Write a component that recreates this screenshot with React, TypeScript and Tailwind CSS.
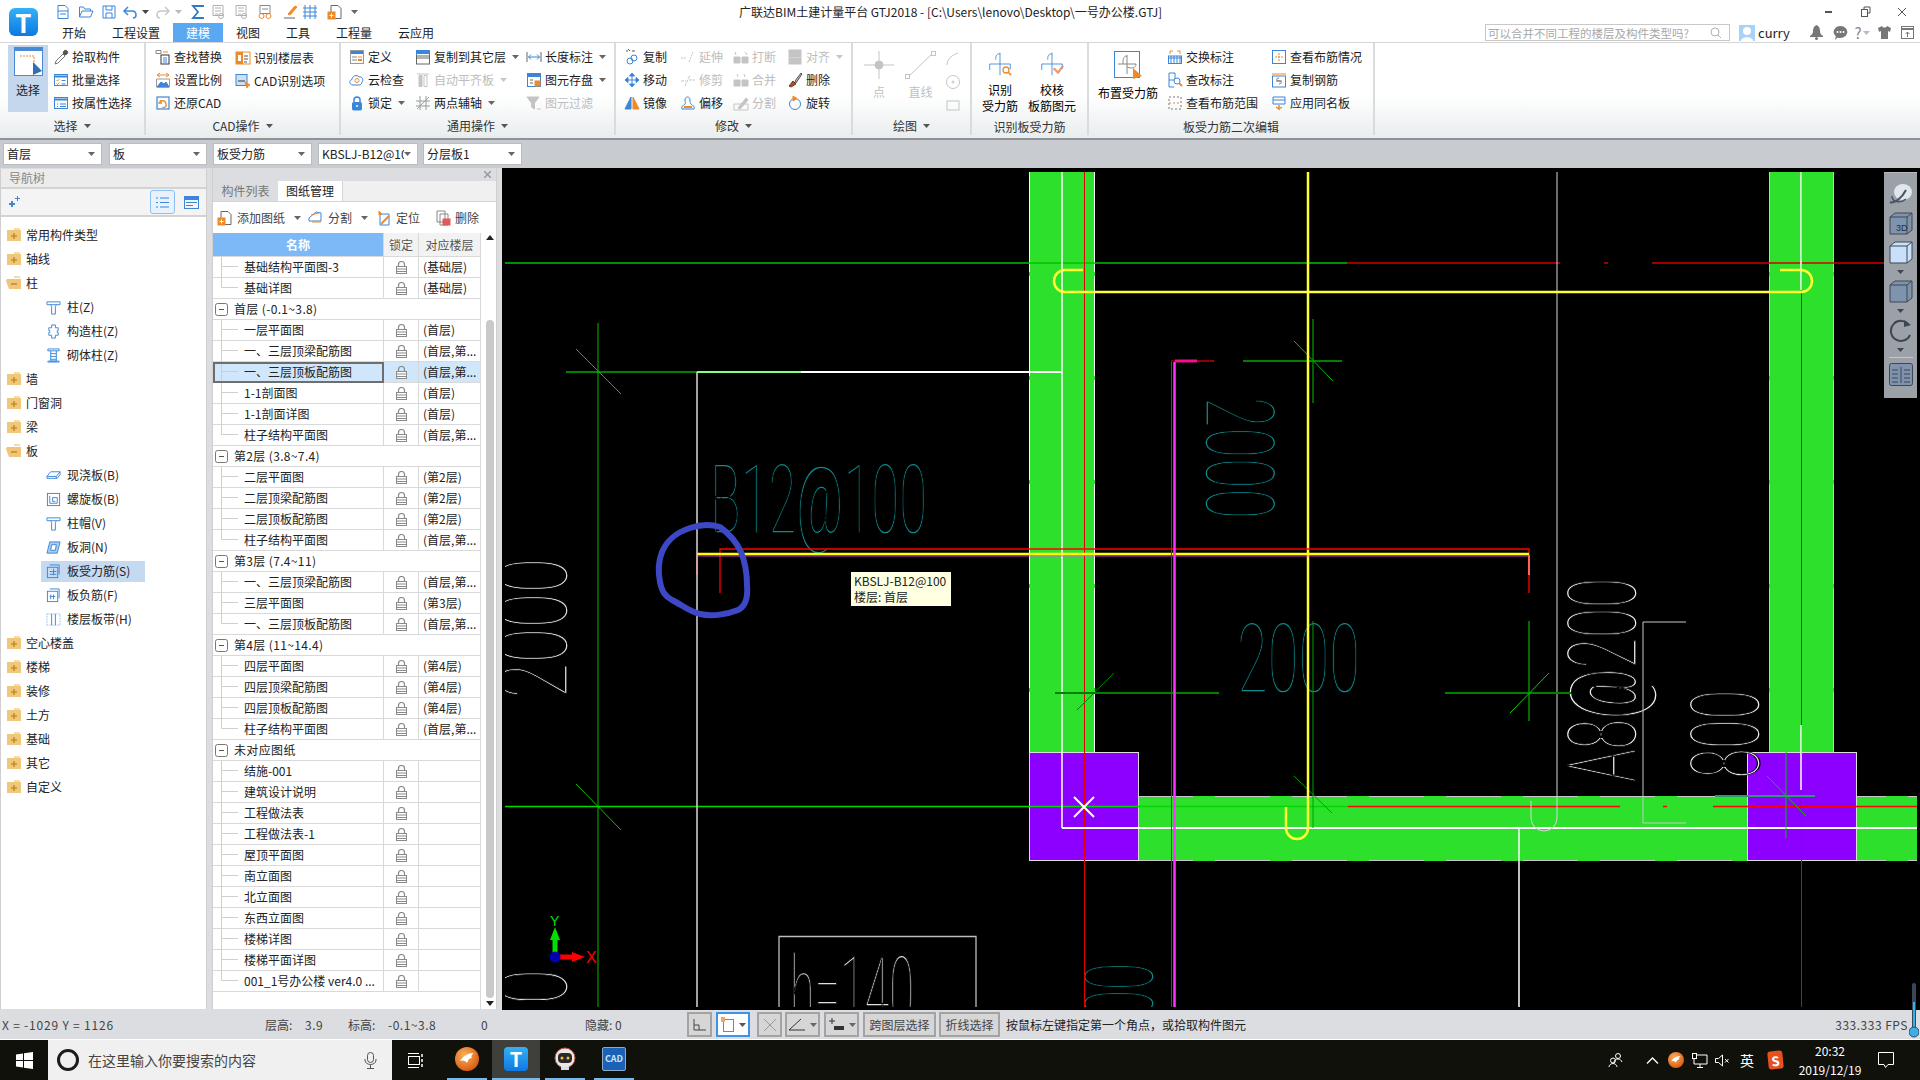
import React from "react";

const BL = "#3b86d8";
const OR = "#ef8a2a";
const GR = "#c4c4c4";

const Ic = ({ s = 16, c = BL, children }: { s?: number; c?: string; children: React.ReactNode }) => (
  <svg width={s} height={s} viewBox="0 0 16 16" fill="none" stroke={c} strokeWidth="1" className="block shrink-0">
    {children}
  </svg>
);

const Caret = ({ c = "#555" }: { c?: string }) => (
  <svg width="7" height="4" viewBox="0 0 7 4" className="block shrink-0">
    <path d="M0 0h7L3.500 4z" fill={c} />
  </svg>
);

// ribbon + quick access icons
const icons: Record<string, React.ReactNode> = {
  doc: <><path d="M3 1.500h7l3 3v10H3z" /><path d="M3 7h10M5 10h6" /></>,
  open: <><path d="M1.500 13V3h4l1 2h6v2" /><path d="M1.500 13l2.500-6h11l-2.500 6z" /></>,
  save: <><path d="M2 2h12v12H2z" /><path d="M5 2v4h6V2M5 14V9h6v5" /></>,
  undo: <><path d="M6 3L2 7l4 4" strokeWidth="1.500" /><path d="M2 7h8c3 0 4 2 4 4s-1 3-3 3" strokeWidth="1.500" /></>,
  redo: <><path d="M10 3l4 4-4 4" strokeWidth="1.500" /><path d="M14 7H6c-3 0-4 2-4 4s1 3 3 3" strokeWidth="1.500" /></>,
  sigma: <path d="M13 3V2H3l5 6-5 6h10v-1" strokeWidth="1.800" />,
  report: <><path d="M3 1.500h10v10H3z" /><path d="M5 4h6M5 7h6M5 10h3" /><circle cx="11" cy="12" r="2.500" /></>,
  glass: <><circle cx="4.500" cy="12" r="2.500" stroke={OR} /><circle cx="11.500" cy="12" r="2.500" stroke={OR} /><path d="M3 1.500h10v8H3zM5 5h6" /></>,
  brush: <><path d="M6 10l7-8 2 1-7 8z" stroke={OR} fill={OR} /><path d="M2 14h11" stroke="#666" /></>,
  grid: <path d="M3 1v14M8 1v14M13 1v14M1 4h14M1 8h14M1 12h14" />,
  docadd: <><path d="M4 1.500h7l3 3v10H4z" stroke="#666" /><rect x="1" y="8" width="7" height="7" fill={OR} stroke={OR} /><path d="M4.500 9.500v4M2.500 11.500h4" stroke="#fff" /></>,
  pick: <><path d="M2 15l1-3 7-7 2 2-7 7z" stroke="#777" /><path d="M10 4l1-2c1-1 2-1 3 0s1 2 0 3l-2 1z" fill="#555" stroke="#555" /></>,
  batch: <><rect x="1.500" y="2.500" width="13" height="11" /><path d="M2 4.500h12" strokeWidth="2" /><path d="M3.500 8l1 1 2-2M3.500 11.500l1 1 2-2" stroke={OR} /><path d="M8.500 8.500h4M8.500 12h4" /></>,
  attr: <><rect x="1.500" y="2.500" width="13" height="11" /><path d="M2 4.500h12" strokeWidth="2" /><path d="M4 9h1M4 11.500h1M7 9h6M7 11.500h6" /></>,
  find: <><path d="M1 1.500h5v3H1z" stroke="#888" /><path d="M8 3h5" stroke={OR} /><rect x="6" y="6" width="8" height="9" stroke="#333" /><path d="M8 9h4M8 11h4M8 13h4" stroke={BL} /></>,
  scale: <><path d="M2 3h12" stroke={OR} /><path d="M5 1L2 3l3 2M11 1l3 2-3 2" stroke={OR} /><path d="M1.500 7h13v8h-13z" stroke="#999" /><path d="M2 15l4-5 3 2 2-2 3 5z" fill={BL} /></>,
  restore: <><rect x="2" y="2" width="12" height="12" strokeWidth="1.200" /><path d="M6 5L4 8h3M5 7.500c2-3 5-2 6 1s-2 5-4 4" stroke={OR} strokeWidth="1.300" /></>,
  floor: <><rect x="1" y="2" width="14" height="12" stroke={OR} /><rect x="1.500" y="2.500" width="6" height="11" fill={OR} stroke={OR} /><path d="M3 5h3v6H3z" fill="#fff" stroke="none" /><path d="M9 6h4M9 9h4M9 12h3" stroke="#555" /></>,
  cadopt: <><rect x="1" y="1.500" width="11" height="11" fill="#cfe0f5" /><path d="M3 8h7" stroke="#333" /><path d="M10 9l5 3-2 1-1 2z" fill={OR} stroke={OR} /></>,
  def: <><rect x="1.500" y="1.500" width="13" height="13" stroke="#999" /><path d="M2 3.500h12" strokeWidth="3" /><path d="M3 8h5M3 11h5" stroke="#888" /><path d="M9 8h4" stroke={OR} /><path d="M9 11h4" stroke={OR} strokeWidth="2" /></>,
  cloud: <><path d="M4 13c-4 0-4-5-1-5.500C3 4 8 2 10 5c3-1 5 3 3 5 0 2-2 3-3 3z" /><circle cx="8" cy="8.500" r="2" stroke={OR} /></>,
  lock: <><path d="M5 8V5a3 3 0 0 1 6 0v3" strokeWidth="1.500" /><rect x="3.500" y="7.500" width="9" height="7.500" rx="1" fill={BL} /><circle cx="8" cy="11" r="1" fill="#fff" stroke="none" /></>,
  copyto: <><rect x="1.500" y="1.500" width="13" height="8" /><path d="M2 3.500h12" strokeWidth="3" /><rect x="1.500" y="7" width="13" height="8" stroke="#666" fill="#fff" /><path d="M2 9h12" stroke="#666" /></>,
  autoalign: <><path d="M2 2h12M4 3.500h3v11H4zM9 3.500h3v11H9z" stroke={GR} /><rect x="4" y="4" width="3" height="10" fill={GR} stroke="none" /></>,
  axis: <><path d="M5 1v14M11 1v14M1 6h14M1 11h14" stroke="#999" /><path d="M2 14L14 2" stroke={OR} /></>,
  dim: <><path d="M1 3v10M15 3v10" stroke="#666" /><path d="M2.500 8h11M5 5.500L2.500 8 5 10.500M11 5.500L13.500 8 11 10.500" /></>,
  storage: <><rect x="1.500" y="1.500" width="13" height="13" /><path d="M2 3.500h12" strokeWidth="3" /><path d="M4 8h3M4 11h3" stroke="#666" /><rect x="9" y="9" width="5" height="5" fill={OR} stroke={OR} /></>,
  filter: <><path d="M1 2h12L8.500 8v6L5.500 12V8z" fill={GR} stroke={GR} /><path d="M11 14h4" stroke={GR} /></>,
  copy: <><path d="M2 2h2M8 2h3M6 2l-2-2" stroke="#555" /><circle cx="10" cy="9" r="3" /><circle cx="6" cy="12" r="3" /></>,
  move: <><path d="M8 1v14M1 8h14" /><path d="M8 1L5.500 4h5zM8 15l-2.500-3h5zM1 8l3-2.500v5zM15 8l-3-2.500v5z" fill={BL} /></>,
  mirror: <><path d="M1 14L7 2v12z" fill={BL} stroke={BL} /><path d="M9 2v12h6z" fill={OR} stroke={OR} /></>,
  extend: <path d="M1 9h6M9 13L13 3" stroke={GR} strokeDasharray="2 1" />,
  trim: <path d="M1 9h5M9 8h6M5 14L10 3" stroke={GR} strokeDasharray="3 1" />,
  offset: <><path d="M2 14c-1-4 2-3 3-5 1-1 0-2 0-4 0-4 5-4 5 0 0 2 0 3 1 4 1 2 4 1 3 5z" /><path d="M4 12h8" stroke={OR} strokeWidth="2" /></>,
  breakit: <><path d="M2 3l1 3M12 3l2 3" stroke={GR} /><path d="M1 8h6v6H1zM9 8h6v6H9z" fill={GR} stroke={GR} /></>,
  merge: <><path d="M4 2l1 3M11 2l1 3" stroke={GR} /><path d="M1 8h6v6H1zM9 8h6v6H9z" fill={GR} stroke={GR} /></>,
  split: <><path d="M1 9h14v6H1z" stroke={GR} /><path d="M5 13L13 3l2 2-8 9z" fill={GR} stroke={GR} /></>,
  align: <><rect x="2" y="1" width="12" height="7" fill={GR} stroke={GR} /><rect x="2" y="9" width="12" height="6" fill={GR} stroke={GR} /></>,
  del: <><path d="M2 14l4-5 3 3-5 3z" fill="#a0522d" stroke="#7a3b1a" /><path d="M8 9l6-8 1 1-6 9z" fill="#bbb" stroke="#555" /></>,
  rotate: <><circle cx="8" cy="9" r="5.500" /><path d="M6 1l4 2.500L6 6z" fill={OR} stroke={OR} /></>,
  swap: <><rect x="1.500" y="7" width="13" height="7.500" /><path d="M2 9h12M4 7v8M7 7v8M10 7v8M13 7v8" /><path d="M3 5V2h3M13 5V2h-3" stroke={OR} /></>,
  check: <><path d="M2 1h6v7H2zM2 8v7h5" /><circle cx="10" cy="9" r="3" fill="#fff" /><path d="M12 11l3 3" stroke={OR} strokeWidth="2" /></>,
  range: <><rect x="2" y="2" width="12" height="12" stroke="#777" strokeDasharray="2 2" /><path d="M2 8h12" stroke={OR} strokeDasharray="2 2" /></>,
  rebar: <><rect x="1.500" y="1.500" width="13" height="13" /><path d="M4 8h8M8 4v8" stroke={OR} strokeDasharray="2 1" /></>,
  crebar: <><rect x="1.500" y="4" width="13" height="11" /><path d="M1 2h14" stroke={OR} /><path d="M8 6c-3 0-3 3 0 3s3 3 0 3M5 9h6" stroke="#777" /></>,
  samename: <><path d="M2 2h12v7H2z" /><path d="M2 5h12" /><path d="M8 10v4l-3-2M8 14l3-2" stroke={OR} strokeWidth="1.500" /></>,
  smallarc: <path d="M2 14C2 8 7 4 13 2" stroke={GR} />,
  smallcircle: <><circle cx="8" cy="8" r="6.500" stroke={GR} /><circle cx="8" cy="8" r="1" stroke={GR} /></>,
  smallrect: <rect x="2" y="4" width="12" height="9" stroke={GR} />,
};

const Item = ({ i, t, off, arrow }: { i: string; t: string; off?: boolean; arrow?: boolean }) => (
  <div className={`flex h-[23px] items-center whitespace-nowrap ${off ? "text-[#bdbdbd]" : "text-[#1c1c1c]"}`}>
    <Ic>{icons[i]}</Ic>
    <span className="ml-[3px]">{t}</span>
    {arrow && (
      <span className="ml-[6px]">
        <Caret c={off ? "#c8c8c8" : "#666"} />
      </span>
    )}
  </div>
);

const Group = ({ w, pl, label, children }: { w: string; pl: string; label: React.ReactNode; children: React.ReactNode }) => (
  <div className={`flex h-[92px] shrink-0 flex-col border-r-2 border-[#d9dcde] ${w}`}>
    <div className={`flex h-[71px] pt-[2px] ${pl}`}>{children}</div>
    <div className="flex flex-1 items-center justify-center gap-[6px] pt-[2px] text-[#333]">{label}</div>
  </div>
);

const GroupLabel = ({ t }: { t: string }) => (
  <>
    <span>{t}</span>
    <Caret />
  </>
);

const BigCross = ({ kind }: { kind: string }) => (
  <svg width="28" height="28" viewBox="0 0 28 28" fill="none" stroke={BL} className="block">
    <path d="M14 1v26" />
    <path d="M2 14h24" />
    <path d="M2 21v-7M14 2c-5 0-5 4-5 7M26 14v6" />
    {kind === "scan" && <><circle cx="21" cy="21" r="3.500" stroke={OR} strokeWidth="1.500" /><path d="M24 24l3 3" stroke={OR} strokeWidth="2" /></>}
    {kind === "ok" && <path d="M16 19l5 5 6-8" stroke="#f0946a" strokeWidth="2.500" />}
  </svg>
);

const Ribbon = () => (
  <div className="flex h-[96px] items-start border-t border-[#d6d6d6] bg-gradient-to-b from-white from-[55%] to-[#e9edee]">
    <Group w="w-[146px]" pl="pl-[8px]" label={<GroupLabel t="选择" />}>
      <div className="flex h-[67px] w-[40px] flex-col items-center bg-[#c5d7ec]">
        <svg width="29" height="29" viewBox="0 0 29 29" className="mt-[2px] block">
          <rect x="0.500" y="0.500" width="28" height="28" fill="#fff" stroke="#4a8ad4" />
          <rect x="0" y="0" width="29" height="4" fill="#4a8ad4" />
          <path d="M6 9h14v11" fill="none" stroke={OR} strokeDasharray="2 1" />
          <path d="M19 15l9 9-9 4z" fill="#2f6fb8" />
        </svg>
        <span className="mt-[6px] text-[#222]">选择</span>
      </div>
      <div className="ml-[5px] flex flex-col pt-[1px]">
        <Item i="pick" t="拾取构件" />
        <Item i="batch" t="批量选择" />
        <Item i="attr" t="按属性选择" />
      </div>
    </Group>
    <Group w="w-[195px]" pl="pl-[9px]" label={<GroupLabel t="CAD操作" />}>
      <div className="flex w-[80px] flex-col pt-[1px]">
        <Item i="find" t="查找替换" />
        <Item i="scale" t="设置比例" />
        <Item i="restore" t="还原CAD" />
      </div>
      <div className="flex flex-col pt-[1px]">
        <Item i="floor" t="识别楼层表" />
        <Item i="cadopt" t="CAD识别选项" />
      </div>
    </Group>
    <Group w="w-[275px]" pl="pl-[8px]" label={<GroupLabel t="通用操作" />}>
      <div className="flex w-[66px] flex-col pt-[1px]">
        <Item i="def" t="定义" />
        <Item i="cloud" t="云检查" />
        <Item i="lock" t="锁定" arrow />
      </div>
      <div className="flex w-[111px] flex-col pt-[1px]">
        <Item i="copyto" t="复制到其它层" arrow />
        <Item i="autoalign" t="自动平齐板" off arrow />
        <Item i="axis" t="两点辅轴" arrow />
      </div>
      <div className="flex flex-col pt-[1px]">
        <Item i="dim" t="长度标注" arrow />
        <Item i="storage" t="图元存盘" arrow />
        <Item i="filter" t="图元过滤" off />
      </div>
    </Group>
    <Group w="w-[237px]" pl="pl-[8px]" label={<GroupLabel t="修改" />}>
      <div className="flex w-[56px] flex-col pt-[1px]">
        <Item i="copy" t="复制" />
        <Item i="move" t="移动" />
        <Item i="mirror" t="镜像" />
      </div>
      <div className="flex w-[53px] flex-col pt-[1px]">
        <Item i="extend" t="延伸" off />
        <Item i="trim" t="修剪" off />
        <Item i="offset" t="偏移" />
      </div>
      <div className="flex w-[54px] flex-col pt-[1px]">
        <Item i="breakit" t="打断" off />
        <Item i="merge" t="合并" off />
        <Item i="split" t="分割" off />
      </div>
      <div className="flex flex-col pt-[1px]">
        <Item i="align" t="对齐" off arrow />
        <Item i="del" t="删除" />
        <Item i="rotate" t="旋转" />
      </div>
    </Group>
    <Group w="w-[119px]" pl="pl-[11px]" label={<GroupLabel t="绘图" />}>
      <div className="flex w-[30px] flex-col items-center pt-[6px] text-[#c0c0c0]">
        <svg width="30" height="28" viewBox="0 0 30 28" fill="none" stroke={GR} className="block">
          <path d="M15 0v28M0 14h30" />
          <circle cx="15" cy="14" r="4" fill={GR} />
        </svg>
        <span className="mt-[5px]">点</span>
      </div>
      <div className="ml-[11px] flex w-[31px] flex-col items-center pt-[6px] text-[#c0c0c0]">
        <svg width="31" height="28" viewBox="0 0 31 28" fill="none" stroke={GR} className="block">
          <path d="M3 26L28 2" />
          <rect x="0.500" y="23.500" width="4" height="4" fill="#fff" />
          <rect x="26.500" y="0.500" width="4" height="4" fill="#fff" />
        </svg>
        <span className="mt-[5px]">直线</span>
      </div>
      <div className="ml-[9px] flex flex-col gap-[7px] pt-[6px]">
        <Ic>{icons.smallarc}</Ic>
        <Ic>{icons.smallcircle}</Ic>
        <Ic>{icons.smallrect}</Ic>
      </div>
    </Group>
    <Group w="w-[117px]" pl="pl-[2px]" label={<span className="pt-[2px]">识别板受力筋</span>}>
      <div className="flex w-[52px] flex-col items-center pt-[7px] leading-[16px]">
        <BigCross kind="scan" />
        <span className="mt-[6px]">识别</span>
        <span>受力筋</span>
      </div>
      <div className="flex w-[52px] flex-col items-center pt-[7px] leading-[16px]">
        <BigCross kind="ok" />
        <span className="mt-[6px]">校核</span>
        <span className="whitespace-nowrap">板筋图元</span>
      </div>
    </Group>
    <Group w="w-[286px]" pl="pl-[3px]" label={<span className="pt-[2px]">板受力筋二次编辑</span>}>
      <div className="flex w-[72px] flex-col items-center pt-[6px] leading-[16px]">
        <svg width="28" height="28" viewBox="0 0 28 28" fill="none" className="block">
          <rect x="0.500" y="0.500" width="25" height="26" stroke={BL} />
          <path d="M13 4v19M4 13h18M13 5c-4 0-4 4-4 8M22 13c0 4-4 5-9 3" stroke="#888" />
          <path d="M19 17l9 8-9 3z" fill={OR} />
        </svg>
        <span className="mt-[6px] whitespace-nowrap">布置受力筋</span>
      </div>
      <div className="ml-[3px] flex w-[104px] flex-col pt-[1px]">
        <Item i="swap" t="交换标注" />
        <Item i="check" t="查改标注" />
        <Item i="range" t="查看布筋范围" />
      </div>
      <div className="flex flex-col pt-[1px]">
        <Item i="rebar" t="查看布筋情况" />
        <Item i="crebar" t="复制钢筋" />
        <Item i="samename" t="应用同名板" />
      </div>
    </Group>
  </div>
);

const TopBar = () => (
  <div className="flex h-[42px] bg-white">
    <div className="flex w-[49px] shrink-0 pl-[9px] pt-[8px]">
      <div className="flex h-[28px] w-[29px] items-center justify-center rounded-[6px] bg-gradient-to-b from-[#35b0f5] to-[#0d78e2] text-[26px] leading-none font-bold text-white">
        T
      </div>
    </div>
    <div className="flex min-w-0 flex-1 flex-col">
      <div className="flex h-[23px] items-center">
        <div className="flex w-[690px] items-center pl-[6px]">
          <div className="w-[23px]"><Ic>{icons.doc}</Ic></div>
          <div className="w-[23px]"><Ic>{icons.open}</Ic></div>
          <div className="w-[21px]"><Ic>{icons.save}</Ic></div>
          <Ic>{icons.undo}</Ic>
          <div className="ml-[4px] w-[13px]"><Caret c="#444" /></div>
          <Ic c="#c8c8c8">{icons.redo}</Ic>
          <div className="ml-[4px] w-[15px]"><Caret c="#bbb" /></div>
          <div className="w-[20px]"><Ic c="#2f78c8">{icons.sigma}</Ic></div>
          <div className="w-[23px]"><Ic c="#b0b0b0">{icons.report}</Ic></div>
          <div className="w-[24px]"><Ic c="#b0b0b0">{icons.report}</Ic></div>
          <div className="w-[25px]"><Ic c="#888">{icons.glass}</Ic></div>
          <div className="w-[20px]"><Ic>{icons.brush}</Ic></div>
          <div className="w-[25px]"><Ic>{icons.grid}</Ic></div>
          <div className="w-[24px]"><Ic>{icons.docadd}</Ic></div>
          <Caret c="#666" />
        </div>
        <div className="whitespace-nowrap text-[#222]">广联达BIM土建计量平台 GTJ2018 - [C:\Users\lenovo\Desktop\一号办公楼.GTJ]</div>
        <div className="ml-auto flex items-center">
          <div className="flex w-[37px] justify-center"><div className="h-[2px] w-[7px] bg-[#555]" /></div>
          <div className="flex w-[37px] justify-center">
            <svg width="10" height="11" viewBox="0 0 10 11" fill="none" stroke="#555" className="block">
              <path d="M3 3V1h6v6H7" />
              <rect x="0.500" y="3.500" width="6" height="7" />
            </svg>
          </div>
          <div className="flex w-[36px] justify-center">
            <svg width="10" height="10" viewBox="0 0 10 10" stroke="#555" className="block">
              <path d="M1 1l8 8M9 1l-8 8" />
            </svg>
          </div>
        </div>
      </div>
      <div className="flex h-[19px] items-stretch text-[#222]">
        {["开始", "工程设置", "建模", "视图", "工具", "工程量", "云应用"].map((t) => (
          <div key={t} className={`flex h-[19px] items-center px-[13px] whitespace-nowrap ${t === "建模" ? "bg-[#5aa8f2] text-white" : ""}`}>
            {t}
          </div>
        ))}
        <div className="ml-auto flex items-center">
          <div className="flex h-[17px] w-[245px] items-center border border-[#c8c8c8] px-[2px] text-[11.500px] text-[#a8a8a8]">
            <span className="whitespace-nowrap">可以合并不同工程的楼层及构件类型吗?</span>
            <svg width="12" height="12" viewBox="0 0 12 12" fill="none" stroke="#b0b0b0" className="ml-auto mr-[5px] block">
              <circle cx="5" cy="5" r="4" />
              <path d="M8 8l3 3" />
            </svg>
          </div>
          <div className="ml-[9px] flex h-[16px] w-[16px] items-end justify-center overflow-hidden bg-[#a9d2f7]">
            <svg width="14" height="15" viewBox="0 0 14 15" className="block">
              <circle cx="7" cy="5" r="4" fill="#fff" />
              <path d="M1 15c0-5 12-5 12 0z" fill="#fff" />
            </svg>
          </div>
          <span className="ml-[3px] w-[46px] text-[13px] text-[#222]">curry</span>
          <div className="flex w-[24px] justify-center">
            <svg width="13" height="15" viewBox="0 0 13 15" fill="#777" className="block">
              <path d="M6.500 0C4 1 3 3 3 6c0 2-1 4-3 5v1h13v-1c-2-1-3-3-3-5 0-3-1-5-3.500-6z" />
              <circle cx="6.500" cy="13.500" r="1.500" />
            </svg>
          </div>
          <div className="flex w-[24px] justify-center">
            <svg width="15" height="14" viewBox="0 0 15 14" className="block">
              <path d="M7.500 0a7 6 0 1 1-3 11.500L2 14l.8-3.700A7 6 0 0 1 7.500 0z" fill="#777" />
              <circle cx="4.500" cy="6" r="1" fill="#fff" />
              <circle cx="7.500" cy="6" r="1" fill="#fff" />
              <circle cx="10.500" cy="6" r="1" fill="#fff" />
            </svg>
          </div>
          <div className="flex w-[20px] items-center justify-center gap-[1px] text-[15px] leading-none text-[#888]">
            ?<Caret c="#bbb" />
          </div>
          <div className="flex w-[25px] justify-center">
            <svg width="13" height="13" viewBox="0 0 13 13" className="block">
              <path d="M4 0L0 2l1 4 2-1v8h7V5l2 1 1-4-4-2c-1 2-4 2-5 0z" fill="#777" />
            </svg>
          </div>
          <div className="flex w-[20px] justify-center">
            <svg width="13" height="13" viewBox="0 0 13 13" fill="none" stroke="#777" className="block">
              <rect x="0.500" y="0.500" width="12" height="12" />
              <path d="M1 3h11" strokeWidth="2" />
              <path d="M6.500 11V6M4.500 8l2-2 2 2" />
            </svg>
          </div>
          <div className="w-[3px]" />
        </div>
      </div>
    </div>
  </div>
);

const Select = ({ w, t, gap }: { w: string; t: string; gap: string }) => (
  <div className={`flex h-[22px] shrink-0 items-center border border-[#bdbdbd] bg-white pl-[3px] pr-[6px] text-[#222] ${w} ${gap}`}>
    <span className="min-w-0 flex-1 overflow-hidden whitespace-nowrap">{t}</span>
    <Caret c="#666" />
  </div>
);

const Toolbar = () => (
  <div className="flex h-[30px] items-center border-t-2 border-[#8f9296] bg-[#c8cbd0] pl-[3px]">
    <Select w="w-[99px]" t="首层" gap="" />
    <Select w="w-[98px]" t="板" gap="ml-[7px]" />
    <Select w="w-[99px]" t="板受力筋" gap="ml-[6px]" />
    <Select w="w-[100px]" t="KBSLJ-B12@100" gap="ml-[6px]" />
    <Select w="w-[99px]" t="分层板1" gap="ml-[5px]" />
  </div>
);

// nav tree
const Folder = ({ open }: { open?: boolean }) => (
  <svg width="16" height="14" viewBox="0 0 16 14" className="block shrink-0">
    <path d="M8 0h6v2H8z" fill="#f6dca6" />
    {open ? (
      <path d="M1 3h14v10H3L0 5z" fill="#f0c47a" />
    ) : (
      <path d="M1 2h14v11H1z" fill="#f0c87c" />
    )}
    <path d={open ? "M5 8h6" : "M5 8h6M8 5v6"} stroke="#c98b2c" strokeWidth="1.600" />
  </svg>
);

const child: Record<string, React.ReactNode> = {
  tee: <><path d="M1 2h14v3H1z" /><path d="M5 5l1 2v8h4V7l1-2" /></>,
  gz: <path d="M6 1h4v3h3v3h-1v2h1v3h-3v3H6v-3H3V9h1V7H3V4h3z" />,
  zt: <><path d="M2 1h12v2H2zM2 14h12v1H2z" /><path d="M5 3v11h6V3M5 6h6M5 9h6M5 12h6" /></>,
  xj: <><path d="M1 9l4-5h10v3l-3 4H1z" /><path d="M1 9h10l4-5M11 9v2" /></>,
  lx: <><rect x="1.500" y="1.500" width="13" height="13" /><path d="M4 4v8h8V6H7v4h3" /></>,
  dong: <><path d="M4 2h11l-3 12H1z" fill="#a9cdf2" /><path d="M6 5h5l-1 6H5z" fill="#fff" /></>,
  sl: <><rect x="1.500" y="3.500" width="11" height="11" fill="#c6dcf5" /><path d="M4 1h10v10M4 8h7M4 11h7M8 5v7" /></>,
  fj: <><rect x="1.500" y="3.500" width="11" height="11" /><path d="M4 1h10v10M5 7v5M8 7v5M4 9h6" /></>,
  bd: <><path d="M1 2h14v12H1z" stroke="#9cc3ee" strokeDasharray="2 1" /><path d="M6 2v12M10 2v12" /></>,
};

const tree: [string, number, string?, boolean?][] = [
  ["常用构件类型", 0], ["轴线", 0], ["柱", 0, undefined, true],
  ["柱(Z)", 1, "tee"], ["构造柱(Z)", 1, "gz"], ["砌体柱(Z)", 1, "zt"],
  ["墙", 0], ["门窗洞", 0], ["梁", 0], ["板", 0, undefined, true],
  ["现浇板(B)", 1, "xj"], ["螺旋板(B)", 1, "lx"], ["柱帽(V)", 1, "tee"], ["板洞(N)", 1, "dong"],
  ["板受力筋(S)", 1, "sl"], ["板负筋(F)", 1, "fj"], ["楼层板带(H)", 1, "bd"],
  ["空心楼盖", 0], ["楼梯", 0], ["装修", 0], ["土方", 0], ["基础", 0], ["其它", 0], ["自定义", 0],
];

const NavPanel = () => (
  <div className="mt-[1px] mb-[1px] flex w-[207px] shrink-0 flex-col border-l border-r border-[#cfcfcf] bg-white">
    <div className="flex h-[20px] items-center border-b-2 border-[#d3d3d3] bg-[#ececec] pl-[8px] text-[#888]">导航树</div>
    <div className="flex h-[28px] items-center border-b-2 border-[#d3d3d3] bg-[#f4f4f4] pl-[6px]">
      <svg width="13" height="12" viewBox="0 0 13 12" fill="#3b86d8" className="block">
        <path d="M4 5v2H2v2h2v2h2V9h2V7H6V5zM10 0v2H8v1h2v2h1V3h2V2h-2V0z" />
      </svg>
      <div className="ml-[130px] flex h-[24px] w-[25px] items-center justify-center rounded-[3px] border border-[#8cc0f2] bg-[#e8f2fc]">
        <svg width="13" height="13" viewBox="0 0 13 13" fill="none" stroke="#3b86d8" className="block">
          <path d="M0 2h2M4 2h9M0 6.500h2M4 6.500h9M0 11h2M4 11h9" />
        </svg>
      </div>
      <div className="ml-[9px]">
        <svg width="15" height="13" viewBox="0 0 15 13" fill="none" className="block">
          <rect x="0.500" y="0.500" width="14" height="12" stroke="#3b86d8" />
          <rect x="0" y="0" width="15" height="4" fill="#3b86d8" />
          <path d="M2 6.500h11M2 9.500h7" stroke="#3b86d8" />
        </svg>
      </div>
    </div>
    <div className="flex flex-col pt-[6px]">
      {tree.map(([t, lvl, ic, open]) =>
        lvl === 0 ? (
          <div key={t} className="flex h-[24px] items-center pl-[5px] text-[#222]">
            <Folder open={open} />
            <span className="ml-[4px]">{t}</span>
          </div>
        ) : (
          <div key={t + ic} className="ml-[40px] flex h-[24px] w-[104px] items-center">
            <div className={`flex h-[21px] w-full items-center pl-[5px] text-[#222] ${t === "板受力筋(S)" ? "bg-[#c5d9f1]" : ""}`}>
              <Ic s={15}>{child[ic as string]}</Ic>
              <span className="ml-[6px] whitespace-nowrap">{t}</span>
            </div>
          </div>
        ),
      )}
    </div>
  </div>
);

// drawing table
type Row = { n: string; f?: string; g?: boolean; last?: boolean; sel?: boolean };
const rows: Row[] = [
  { n: "基础结构平面图-3", f: "(基础层)" },
  { n: "基础详图", f: "(基础层)", last: true },
  { n: "首层 (-0.1~3.8)", g: true },
  { n: "一层平面图", f: "(首层)" },
  { n: "一、三层顶梁配筋图", f: "(首层,第..." },
  { n: "一、三层顶板配筋图", f: "(首层,第...", sel: true },
  { n: "1-1剖面图", f: "(首层)" },
  { n: "1-1剖面详图", f: "(首层)" },
  { n: "柱子结构平面图", f: "(首层,第...", last: true },
  { n: "第2层 (3.8~7.4)", g: true },
  { n: "二层平面图", f: "(第2层)" },
  { n: "二层顶梁配筋图", f: "(第2层)" },
  { n: "二层顶板配筋图", f: "(第2层)" },
  { n: "柱子结构平面图", f: "(首层,第...", last: true },
  { n: "第3层 (7.4~11)", g: true },
  { n: "一、三层顶梁配筋图", f: "(首层,第..." },
  { n: "三层平面图", f: "(第3层)" },
  { n: "一、三层顶板配筋图", f: "(首层,第...", last: true },
  { n: "第4层 (11~14.4)", g: true },
  { n: "四层平面图", f: "(第4层)" },
  { n: "四层顶梁配筋图", f: "(第4层)" },
  { n: "四层顶板配筋图", f: "(第4层)" },
  { n: "柱子结构平面图", f: "(首层,第...", last: true },
  { n: "未对应图纸", g: true },
  { n: "结施-001" },
  { n: "建筑设计说明" },
  { n: "工程做法表" },
  { n: "工程做法表-1" },
  { n: "屋顶平面图" },
  { n: "南立面图" },
  { n: "北立面图" },
  { n: "东西立面图" },
  { n: "楼梯详图" },
  { n: "楼梯平面详图" },
  { n: "001_1号办公楼 ver4.0 ...", last: true },
];

const LockIcon = () => (
  <svg width="11" height="13" viewBox="0 0 11 13" fill="none" className="block">
    <path d="M2.500 6V3.500a3 3 0 0 1 6 0V6" stroke="#8a8a8a" strokeWidth="1.200" />
    <rect x="0.500" y="5.500" width="10" height="7" fill="#fff" stroke="#8a8a8a" />
    <path d="M1 8h9M1 10.500h9" stroke="#8a8a8a" />
  </svg>
);

const TableRow = ({ r }: { r: Row }) =>
  r.g ? (
    <div className="flex h-[21px] w-[267px] items-center border-b border-[#d9d9d9] pl-[2px] text-[#222]">
      <svg width="13" height="13" viewBox="0 0 13 13" fill="none" className="block shrink-0">
        <rect x="0.500" y="0.500" width="12" height="12" rx="2" stroke="#777" />
        <path d="M4 6.500h5" stroke="#555" />
      </svg>
      <span className="ml-[6px] tracking-[0.35px]">{r.n}</span>
    </div>
  ) : (
    <div className={`flex h-[21px] w-[267px] items-center border-b border-[#d9d9d9] text-[#222] ${r.sel ? "bg-[#d0e6fb]" : ""}`}>
      <div className={`flex h-[21px] w-[171px] shrink-0 items-center overflow-hidden ${r.sel ? "border-2 border-[#6e6e6e]" : "border-r border-[#d9d9d9]"}`}>
        <svg width="31" height="21" viewBox="0 0 31 21" fill="none" stroke="#cfcfcf" className={`block shrink-0 ${r.sel ? "-ml-[2px]" : ""}`}>
          <path d={r.last ? "M8.500 0v9.500H25" : "M8.500 0v21M9 9.500h16"} />
        </svg>
        <span className="whitespace-nowrap">{r.n}</span>
      </div>
      <div className="flex h-[21px] w-[35px] shrink-0 items-center justify-center border-r border-[#d9d9d9]">
        <LockIcon />
      </div>
      <span className="ml-[4px] whitespace-nowrap">{r.f}</span>
    </div>
  );

const ToolBtn = ({ children, t, arrow, w }: { children: React.ReactNode; t: string; arrow?: boolean; w: string }) => (
  <div className={`flex items-center text-[#444] ${w}`}>
    {children}
    <span className="ml-[4px]">{t}</span>
    {arrow && <span className="ml-[9px]"><Caret c="#666" /></span>}
  </div>
);

const DrawingPanel = () => (
  <div className="mb-[1px] ml-[5px] flex w-[285px] shrink-0 flex-col border-r border-l border-[#cfcfcf] bg-white">
    <div className="flex h-[13px] items-center justify-end bg-[#dcdde0] pr-[5px]">
      <svg width="7" height="7" viewBox="0 0 7 7" stroke="#999" strokeWidth="1.500" className="block">
        <path d="M0 0l7 7M7 0L0 7" />
      </svg>
    </div>
    <div className="flex h-[21px] items-stretch border-b border-[#d5d5d5] bg-[#f0f0f0]">
      <div className="flex w-[65px] items-center justify-center bg-[#dcdde0] text-[#777]">构件列表</div>
      <div className="flex w-[65px] items-center justify-center border-r border-[#d5d5d5] bg-white text-[#222]">图纸管理</div>
    </div>
    <div className="flex h-[31px] items-center pl-[4px]">
      <ToolBtn t="添加图纸" arrow w="w-[91px]">
        <Ic>{icons.docadd}</Ic>
      </ToolBtn>
      <ToolBtn t="分割" arrow w="w-[68px]">
        <Ic><path d="M1 8l7-6 5 1v8H1z" stroke={BL} /><path d="M4 12h9M3 5l8-2" stroke={OR} /></Ic>
      </ToolBtn>
      <ToolBtn t="定位" w="w-[59px]">
        <Ic><path d="M4 4h9v11H4z" stroke={BL} /><path d="M5 14l8-8" stroke={OR} strokeWidth="2" /><path d="M3 1l3 3-3 1z" fill={OR} stroke={OR} /></Ic>
      </ToolBtn>
      <ToolBtn t="删除" w="w-[50px]">
        <Ic c="#888"><path d="M2 1h8v11H2zM5 4h8v11H5z" /><rect x="8" y="9" width="7" height="6" fill="#e05a5a" stroke="#e05a5a" /></Ic>
      </ToolBtn>
    </div>
    <div className="flex min-h-0 flex-1">
      <div className="flex w-[268px] shrink-0 flex-col border-r border-[#d9d9d9]">
        <div className="flex h-[24px] shrink-0 items-stretch border-b border-[#d9d9d9] bg-[#f2f2f2] text-[#555]">
          <div className="flex w-[171px] shrink-0 items-center justify-center border-r border-[#d9d9d9] bg-[#7db8f7] font-bold text-white">名称</div>
          <div className="flex w-[35px] shrink-0 items-center justify-center border-r border-[#d9d9d9]">锁定</div>
          <div className="flex flex-1 items-center justify-center">对应楼层</div>
        </div>
        {rows.map((r, i) => (
          <TableRow key={i} r={r} />
        ))}
        <div className="flex-1 bg-white" />
      </div>
      <div className="ml-[5px] flex w-[8px] flex-col items-center">
        <svg width="8" height="5" viewBox="0 0 8 5" className="mt-[2px] block shrink-0">
          <path d="M4 0l4 5H0z" fill="#222" />
        </svg>
        <div className="mt-[80px] w-[8px] flex-1 rounded-[4px] bg-[#c9c9c9]" />
        <svg width="8" height="5" viewBox="0 0 8 5" className="my-[3px] block shrink-0">
          <path d="M0 0h8L4 5z" fill="#222" />
        </svg>
      </div>
    </div>
  </div>
);

// CAD canvas
const CadText = ({ x, y, len, size, rot = 0, c, t }: { x: number; y: number; len: number; size: number; rot?: number; c: string; t: string }) => (
  <text
    x={x}
    y={y}
    transform={rot ? `rotate(${rot} ${x} ${y})` : undefined}
    textLength={len}
    lengthAdjust="spacingAndGlyphs"
    fontSize={size}
    fontFamily="Roboto, sans-serif"
    fontWeight={100}
    fill={c}
    stroke="#000"
    strokeWidth="1.300"
  >
    {t}
  </text>
);

const Cross = ({ x, y1, y2, hx1, hx2, hy, d1, d2, hc = "#008000", vc = "#00c000" }: { x: number; y1: number; y2: number; hx1: number; hx2: number; hy: number; d1: [number, number]; d2: [number, number]; hc?: string; vc?: string }) => (
  <g fill="none">
    <path d={`M${x} ${y1}V${y2}`} stroke={vc} />
    <path d={`M${hx1} ${hy}H${hx2}`} stroke={hc} strokeWidth="2" />
    <path d={`M${d1[0]} ${d1[1]}L${d2[0]} ${d2[1]}`} stroke={vc} />
  </g>
);

const cubePath = "M1 5l5-4h17v17l-5 4H1z";
const cubeEdge = "M1 5h17v17M18 5l5-4";

const CadCanvas = () => (
  <div className="relative min-w-0 flex-1 bg-black">
    <svg width="1418" height="842" viewBox="502 168 1418 842" className="block" fill="none">
      <defs>
        <clipPath id="cad">
          <rect x="505" y="172" width="1412" height="835" />
        </clipPath>
      </defs>
      <g clipPath="url(#cad)">
        {/* slab bands */}
        <rect x="1029" y="172" width="66" height="580" fill="#2ce02c" />
        <rect x="1769" y="172" width="65" height="580" fill="#2ce02c" />
        <rect x="1138" y="796" width="609" height="65" fill="#2ce02c" />
        <rect x="1856" y="796" width="61" height="65" fill="#2ce02c" />
        <path d="M1029.500 172V752M1094.500 172V752" stroke="#fff" strokeDasharray="100 4" />
        <path d="M1769.500 172V752M1833.500 172V752" stroke="#c8c8c8" strokeDasharray="100 4" />
        <path d="M1138 796.500H1917M1138 860.500H1917" stroke="#c8c8c8" strokeDasharray="55 22" />
        <rect x="1029.500" y="752.500" width="109" height="108" fill="#8b00ff" stroke="#ddd" />
        <rect x="1747.500" y="752.500" width="109" height="108" fill="#8b00ff" stroke="#ddd" />

        {/* drawing text */}
        <CadText x={710} y={533} len={217} size={96} c="#0d8c8c" t="B12@100" />
        <CadText x={1206} y={397} len={122} size={96} rot={90} c="#0d8c8c" t="2000" />
        <CadText x={1237} y={692} len={123} size={96} c="#0d8c8c" t="2000" />
        <CadText x={1636} y={782} len={204} size={96} rot={-90} c="#f0f0f0" t="A8@200" />
        <CadText x={1759} y={778} len={88} size={96} rot={-90} c="#f0f0f0" t="800" />
        <CadText x={567} y={698} len={140} size={96} rot={-90} c="#e0e0e0" t="2000" />
        <CadText x={567} y={1040} len={71} size={96} rot={-90} c="#e0e0e0" t="00" />
        <CadText x={1153} y={1017} len={54} size={96} rot={-90} c="#0d8c8c" t="00" />
        <CadText x={790} y={1025} len={124} size={96} c="#e0e0e0" t="h=140" />
        <path d="M779 1007V936.500H976V1007" stroke="#bdbdbd" strokeWidth="1.300" />

        {/* axis lines */}
        <path d="M505 263H1347" stroke="#00c000" strokeWidth="1.500" />
        <path d="M1347 263H1560M1604 263H1608M1652 263H1917" stroke="#d00000" strokeWidth="1.500" />
        <path d="M505 806.500H1348" stroke="#00d800" strokeWidth="1.500" />
        <path d="M1348 806.500H1620M1663 806.500H1667M1713 806.500H1917" stroke="#ff0000" strokeWidth="1.500" />
        <path d="M1084.500 172V1007" stroke="#e00000" />
        <path d="M1801.500 172V1007" stroke="#e00000" />
        <path d="M1062 172V828" stroke="#fff" strokeWidth="1.500" />
        <path d="M1801 172V290M1801 725V790" stroke="#fff" strokeWidth="1.500" />
        <path d="M1062 828H1917" stroke="#fff" strokeWidth="2" />
        <path d="M1519 828V1007" stroke="#fff" strokeWidth="1.500" />

        {/* white wall lines */}
        <path d="M566 372H697" stroke="#008000" strokeWidth="2" />
        <path d="M697 372H801" stroke="#80ff80" strokeWidth="2" />
        <path d="M801 372H1062" stroke="#fff" strokeWidth="2" />
        <path d="M697 372V1007" stroke="#d8d8d8" strokeWidth="1.500" />
        <path d="M1557 172V818a13 13 0 0 1-26 0V801" stroke="#d8d8d8" strokeWidth="1" />
        <path d="M1686 622H1643V823H1686" stroke="#c8c8c8" />

        {/* crosses */}
        <Cross x={598} y1={323} y2={1007} hx1={566} hx2={566} hy={372} d1={[576, 349]} d2={[621, 394]} />
        <path d="M576 784L621 830" stroke="#00c000" />
        <Cross x={1313} y1={319} y2={403} hx1={1243} hx2={1342} hy={361} d1={[1294, 341]} d2={[1333, 381]} />
        <path d="M1210 361H1214" stroke="#c00000" strokeWidth="2" />
        <Cross x={1313} y1={621} y2={828} hx1={1055} hx2={1219} hy={693} d1={[1294, 776]} d2={[1332, 813]} vc="#00a000" />
        <Cross x={1529} y1={621} y2={721} hx1={1445} hx2={1571} hy={693} d1={[1549, 673]} d2={[1510, 713]} vc="#00d800" />
        <path d="M1114 673L1077 710" stroke="#008000" />
        <Cross x={1786} y1={752} y2={838} hx1={1715} hx2={1815} hy={796} d1={[1767, 776]} d2={[1806, 816]} hc="#2b9a6a" vc="#00c000" />

        {/* yellow bars */}
        <path d="M1083 270H1065a11 11 0 0 0 0 22H1801a11 11 0 0 0 0-22H1780" stroke="#ffff33" strokeWidth="2.500" />
        <path d="M1308 172V828a11 11 0 0 1-22 0V807" stroke="#ffff33" strokeWidth="2.500" />
        <path d="M720 593V549H1529V593" stroke="#ff0000" strokeWidth="1.300" />
        <path d="M697 554H1529" stroke="#ffff00" strokeWidth="2.500" />
        <path d="M697 556H1529" stroke="#ff40ff" strokeWidth="0.800" />
        <path d="M697 555V575" stroke="#ffa0a0" />
        <path d="M1529 555V575" stroke="#ff6060" strokeWidth="2" />

        {/* magenta bar */}
        <path d="M1171.500 362V1007" stroke="#f00000" />
        <path d="M1174.500 362V1007" stroke="#ff33ff" strokeWidth="2.500" />
        <path d="M1171 361H1175" stroke="#f00000" />
        <path d="M1175 361H1197" stroke="#f01090" strokeWidth="3" />
        <path d="M1197 361H1213" stroke="#900000" strokeWidth="2" />

        <path d="M1074 797L1094 817M1094 797L1074 817" stroke="#fff" strokeWidth="2" />

        {/* hand drawn circle */}
        <path
          d="M720 527C710 524 699 525 690 528C678 532 668 538 662 552C658 562 658 572 660 582C662 592 665 596 672 600C682 605 690 612 700 614C712 617 728 614 738 610C746 606 748 596 747 585C747 572 745 562 741 552C736 541 728 533 720 527Z"
          stroke="#3d48c6"
          strokeWidth="6"
          strokeLinejoin="round"
        />

        {/* axes gizmo */}
        <path d="M555 957V940" stroke="#00e000" strokeWidth="5" />
        <path d="M555 927l5 13h-10z" fill="#00e000" />
        <path d="M555 957H572" stroke="#ff0000" strokeWidth="5" />
        <path d="M585 957l-13 5v-10z" fill="#ff0000" />
        <circle cx="555" cy="957" r="5.500" fill="#0000b0" />
        <text x="550" y="926" fontSize="14" fontFamily="Liberation Sans" fill="#00e000">Y</text>
        <text x="586" y="963" fontSize="16" fontFamily="Liberation Sans" fill="#ff0000">X</text>
      </g>
    </svg>

    <div className="absolute top-[4px] left-[1382px] flex h-[226px] w-[33px] flex-col items-center border-t border-[#b5b8bd] bg-[#9ca1a8] pt-[11px]">
      <svg width="24" height="20" viewBox="0 0 24 20" className="block shrink-0">
        <ellipse cx="14" cy="8" rx="9" ry="8" fill="#dfe6ee" />
        <path d="M1 18c4 2 12-4 16-12" fill="none" stroke="#4a5564" strokeWidth="2" />
        <path d="M3 12c0 6 8 8 14 3" fill="none" stroke="#4a5564" strokeWidth="1.500" />
      </svg>
      <svg width="24" height="23" viewBox="0 0 24 23" fill="#7f93ad" stroke="#3d4754" className="mt-[8px] block shrink-0">
        <path d={cubePath} />
        <path d={cubeEdge} fill="none" />
        <text x="7" y="19" fontSize="9" fontFamily="Liberation Sans" fill="#25303c" stroke="none">3D</text>
      </svg>
      <svg width="24" height="23" viewBox="0 0 24 23" fill="#c9e0fb" stroke="#3d4754" className="mt-[6px] block shrink-0">
        <path d={cubePath} />
        <path d={cubeEdge} fill="none" />
      </svg>
      <div className="mt-[6px]"><Caret c="#3d4754" /></div>
      <svg width="24" height="23" viewBox="0 0 24 23" fill="#7f93ad" stroke="#3d4754" className="mt-[6px] block shrink-0">
        <path d={cubePath} />
        <path d={cubeEdge} fill="none" />
      </svg>
      <div className="mt-[6px]"><Caret c="#3d4754" /></div>
      <svg width="24" height="23" viewBox="0 0 24 23" fill="none" stroke="#3d4754" strokeWidth="2" className="mt-[6px] block shrink-0">
        <path d="M20 6a10 10 0 1 0 1 10" />
        <path d="M15 1l7 5-7 2z" fill="#3d4754" stroke="none" />
      </svg>
      <div className="mt-[6px]"><Caret c="#3d4754" /></div>
      <div className="mt-[5px] h-px w-[24px] bg-[#c4c7cb]" />
      <svg width="24" height="23" viewBox="0 0 24 23" fill="#7f93ad" stroke="#3d4754" className="mt-[5px] block shrink-0">
        <rect x="0.500" y="0.500" width="23" height="22" rx="2" />
        <path d="M12 4v16M3 7h6M15 7h6M3 11h6M15 11h6M3 15h6M15 15h6M3 19h6M15 19h6" />
      </svg>
    </div>

    <div className="absolute top-[404px] left-[349px] flex h-[34px] w-[100px] flex-col justify-center bg-[#ffffe1] pl-[3px] text-[12px] leading-[16px] text-[#222]">
      <span>KBSLJ-B12@100</span>
      <span>楼层: 首层</span>
    </div>
  </div>
);

const StatusBtn = ({ w, ml, active, children }: { w: string; ml: string; active?: boolean; children: React.ReactNode }) => (
  <div className={`flex h-[25px] shrink-0 items-center justify-center border-2 text-[#444] ${w} ${ml} ${active ? "border-[#3c94e8] bg-white" : "border-[#a3a3a3] bg-[#d6d6d6]"}`}>
    {children}
  </div>
);

const StatusBar = () => (
  <div className="flex h-[30px] items-center border-b border-white bg-[#dcdde0] pl-[2px] whitespace-nowrap text-[#444]">
    <span className="w-[263px] tracking-[0.8px]">X = -1029 Y = 1126</span>
    <span className="w-[40px]">层高:</span>
    <span className="w-[43px] tracking-[0.5px]">3.9</span>
    <span className="w-[40px]">标高:</span>
    <span className="w-[93px] tracking-[0.5px]">-0.1~3.8</span>
    <span className="w-[104px]">0</span>
    <span className="w-[102px]">隐藏: 0</span>
    <StatusBtn w="w-[25px]" ml="">
      <svg width="13" height="12" viewBox="0 0 13 12" fill="none" stroke="#444" className="block"><path d="M1 0v11h12M1 6h5v5" /></svg>
    </StatusBtn>
    <StatusBtn w="w-[34px]" ml="ml-[4px]" active>
      <div className="flex items-center gap-[5px]">
        <svg width="13" height="15" viewBox="0 0 13 15" fill="none" className="block">
          <rect x="2.500" y="2.500" width="10" height="12" stroke="#3c94e8" />
          <rect x="0" y="0" width="4" height="5" fill="#f2a65e" />
        </svg>
        <Caret c="#555" />
      </div>
    </StatusBtn>
    <StatusBtn w="w-[25px]" ml="ml-[7px]">
      <svg width="14" height="14" viewBox="0 0 14 14" stroke="#999" className="block"><path d="M1 1l12 12M13 1L1 13" /></svg>
    </StatusBtn>
    <StatusBtn w="w-[35px]" ml="ml-[3px]">
      <div className="flex items-center gap-[5px]">
        <svg width="16" height="13" viewBox="0 0 16 13" fill="none" stroke="#333" className="block"><path d="M0 12L12 1M0 12h16" /></svg>
        <Caret c="#666" />
      </div>
    </StatusBtn>
    <StatusBtn w="w-[35px]" ml="ml-[4px]">
      <div className="flex items-center gap-[5px]">
        <svg width="16" height="13" viewBox="0 0 16 13" className="block"><path d="M4 0v6M1 3h6" stroke="#333" fill="none" /><rect x="6" y="8" width="10" height="4" fill="#333" /></svg>
        <Caret c="#666" />
      </div>
    </StatusBtn>
    <StatusBtn w="w-[73px]" ml="ml-[4px]">跨图层选择</StatusBtn>
    <StatusBtn w="w-[61px]" ml="ml-[3px]">折线选择</StatusBtn>
    <span className="ml-[6px] text-[#222]">按鼠标左键指定第一个角点，或拾取构件图元</span>
    <span className="mr-[12px] ml-auto tracking-[0.5px]">333.333 FPS</span>
  </div>
);

const OrangeOrb = ({ s }: { s: number }) => (
  <svg width={s} height={s} viewBox="0 0 24 24" className="block">
    <defs>
      <radialGradient id={`orb${s}`} cx="40%" cy="35%" r="70%">
        <stop offset="0" stopColor="#f9b35a" />
        <stop offset="1" stopColor="#d9560f" />
      </radialGradient>
    </defs>
    <circle cx="12" cy="12" r="12" fill={`url(#orb${s})`} />
    <path d="M5 14c3-5 8-8 14-8-3 2-3 4-2 5-3 0-4 2-5 5-1-2-4-3-7-2z" fill="#fff" />
  </svg>
);

const TaskSlot = ({ ml, w = "w-[40px]", active, children }: { ml: string; w?: string; active?: boolean; children: React.ReactNode }) => (
  <div className={`flex h-[40px] shrink-0 items-center justify-center border-b-[2px] border-[#76b9ed] ${w} ${ml} ${active ? "bg-[#3f3f3b]" : ""}`}>
    {children}
  </div>
);

const Taskbar = () => (
  <div className="flex h-[40px] items-stretch bg-[#11110c] text-white">
    <div className="flex w-[48px] shrink-0 items-center justify-center">
      <svg width="17" height="17" viewBox="0 0 17 17" fill="#fff" className="block">
        <path d="M0 2.400L7 1.400V8H0zM8 1.300L17 0V8H8zM0 9h7v6.600L0 14.600zM8 9h9v8L8 15.700z" />
      </svg>
    </div>
    <div className="flex w-[344px] shrink-0 items-center bg-[#f0f0f0] pl-[9px] text-[14px] text-[#444]">
      <div className="h-[22px] w-[22px] rounded-full border-[3px] border-[#1b1b1b]" />
      <span className="ml-[9px]">在这里输入你要搜索的内容</span>
      <svg width="13" height="17" viewBox="0 0 13 17" fill="none" stroke="#555" className="mr-[15px] ml-auto block">
        <rect x="3.500" y="0.500" width="6" height="10" rx="3" />
        <path d="M1 7v1c0 6 11 6 11 0V7M6.500 13v3M3 16.500h7" />
      </svg>
    </div>
    <div className="flex w-[48px] shrink-0 items-center justify-center">
      <svg width="16" height="15" viewBox="0 0 16 15" fill="none" stroke="#fff" className="block">
        <rect x="0.500" y="3.500" width="11" height="8" />
        <path d="M0 0.500h11M0 14.500h11" />
        <path d="M14 1v3M14 6v3M14 11v3" strokeWidth="1.500" />
      </svg>
    </div>
    <TaskSlot ml="ml-[7px]"><OrangeOrb s={24} /></TaskSlot>
    <TaskSlot ml="ml-[5px]" w="w-[48px]" active>
      <div className="flex h-[24px] w-[24px] items-center justify-center rounded-[4px] bg-gradient-to-b from-[#35b0f5] to-[#0d78e2] text-[20px] leading-none font-bold text-white">T</div>
    </TaskSlot>
    <TaskSlot ml="ml-[5px]">
      <svg width="24" height="24" viewBox="0 0 24 24" className="block">
        <circle cx="12" cy="11" r="10" fill="#e8e8e8" stroke="#b5523c" />
        <rect x="5" y="6" width="14" height="10" rx="4" fill="#2a2a2a" />
        <circle cx="9" cy="11" r="1.500" fill="#f2c230" />
        <circle cx="15" cy="11" r="1.500" fill="#f2c230" />
        <rect x="8" y="20" width="8" height="3" fill="#ddd" />
      </svg>
    </TaskSlot>
    <TaskSlot ml="ml-[9px]">
      <div className="flex h-[24px] w-[24px] items-center justify-center rounded-[2px] border border-[#8fa9c6] bg-[#1a62b8] text-[9px] font-bold text-[#cfe2f7]">CAD</div>
    </TaskSlot>
    <div className="ml-auto flex items-center">
      <div className="flex w-[30px] justify-center">
        <svg width="15" height="16" viewBox="0 0 15 16" fill="none" stroke="#fff" className="block">
          <circle cx="10" cy="4" r="2.500" />
          <path d="M6 11c0-3 2-4 4-4s3 1 4 3" />
          <circle cx="5" cy="8.500" r="2.500" />
          <path d="M1 15c0-2 2-3.500 4-3.500S9 13 9 15" />
        </svg>
      </div>
      <div className="w-[10px]" />
      <div className="flex w-[24px] justify-center">
        <svg width="13" height="7" viewBox="0 0 13 7" fill="none" stroke="#fff" strokeWidth="1.300" className="block"><path d="M1 6.500l5.500-5.500 5.500 5.500" /></svg>
      </div>
      <div className="flex w-[24px] justify-center"><OrangeOrb s={16} /></div>
      <div className="flex w-[24px] justify-center">
        <svg width="16" height="15" viewBox="0 0 16 15" fill="none" stroke="#fff" className="block">
          <path d="M5 2h10v9H2V6" />
          <rect x="0.500" y="0.500" width="4" height="5" />
          <path d="M8 11v3M5 14.500h6" />
        </svg>
      </div>
      <div className="flex w-[21px] justify-center">
        <svg width="15" height="13" viewBox="0 0 15 13" fill="none" stroke="#fff" className="block">
          <path d="M0.500 4.500h3L7.500 1v11L3.500 8.500h-3z" />
          <path d="M10 5l3.500 3.500M13.500 5L10 8.500" />
        </svg>
      </div>
      <div className="flex w-[28px] justify-center text-[14px]">英</div>
      <div className="flex w-[28px] justify-center">
        <div className="flex h-[18px] w-[15px] -rotate-6 items-center justify-center rounded-[3px] bg-[#e8501f] text-[13px] leading-none font-bold text-white">S</div>
      </div>
      <div className="flex w-[82px] flex-col items-center text-[12px] leading-[19px]">
        <span>20:32</span>
        <span>2019/12/19</span>
      </div>
      <div className="flex w-[30px] justify-center">
        <svg width="16" height="17" viewBox="0 0 16 17" fill="none" stroke="#fff" className="block"><path d="M0.500 0.500h15v12H10L7.500 15.500 6 12.500H0.500z" /></svg>
      </div>
      <div className="w-[19px]" />
    </div>
  </div>
);

export default function App() {
  return (
    <div className="relative flex h-[1080px] w-[1920px] flex-col overflow-hidden bg-[#dcdde0] font-['Noto_Sans_CJK_SC','Liberation_Sans',sans-serif] text-[12px] leading-[16px]">
      <TopBar />
      <Ribbon />
      <Toolbar />
      <div className="flex h-[842px]">
        <NavPanel />
        <DrawingPanel />
        <div className="w-[5px] shrink-0" />
        <CadCanvas />
      </div>
      <StatusBar />
      <Taskbar />
      <div className="absolute top-[982px] left-[1909px] z-10">
        <svg width="10" height="56" viewBox="0 0 10 56" className="block">
          <path d="M3 3a2 2 0 0 1 4 0v44H3z" fill="#38485a" />
          <path d="M4 20h2v30H4z" fill="#39b0e8" />
          <circle cx="5" cy="50" r="5" fill="#39b0e8" stroke="#38485a" />
        </svg>
      </div>
    </div>
  );
}
